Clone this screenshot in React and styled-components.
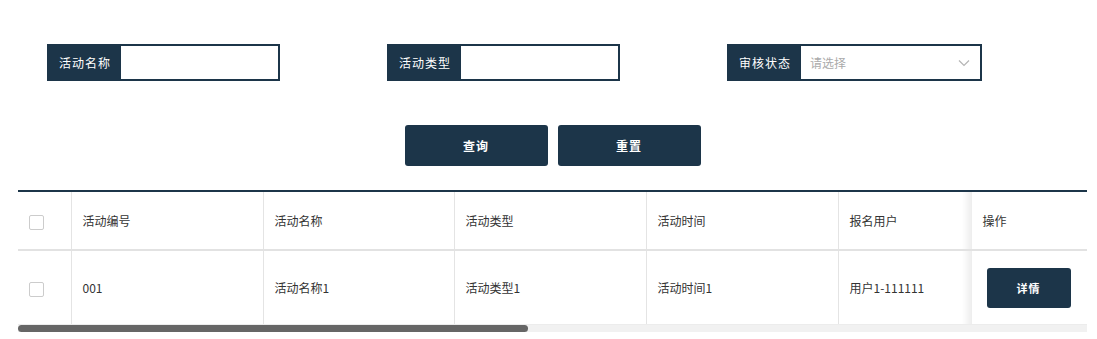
import React from 'react'
import styled, { createGlobalStyle } from 'styled-components'

const navy = '#1c3549'

const GlobalStyle = createGlobalStyle`
    body {
        margin: 0;
        background: #fff;
        font-family: "Noto Sans CJK SC", "Liberation Sans", sans-serif;
    }
`

const Page = styled.div`
    padding: 44px 10px 0 18px;
`

const SearchForm = styled.div`
    display: grid;
    grid-template-columns: repeat(3, 340px);
    padding-left: 29px;
`

const Field = styled.div`
    display: flex;
    width: ${p => p.width}px;
    height: 37px;
    border: 2px solid ${navy};
    box-sizing: border-box;
`

const FieldLabel = styled.div`
    display: flex;
    align-items: center;
    justify-content: center;
    width: 72px;
    flex-shrink: 0;
    background: ${navy};
    color: #fff;
    font-size: 12px;
    letter-spacing: 1px;
`

const FieldInput = styled.input`
    flex: 1;
    min-width: 0;
    border: none;
    outline: none;
    padding: 0 10px;
    font: inherit;
    font-size: 12px;
`

const SelectBox = styled.div`
    flex: 1;
    display: flex;
    align-items: center;
    justify-content: space-between;
    padding: 0 10px 0 9px;
    color: #aaa;
    font-size: 12px;
`

const Actions = styled.div`
    display: flex;
    justify-content: center;
    gap: 10px;
    margin: 44px 0 24px;
`

const Button = styled.button`
    width: ${p => p.width || 143}px;
    height: ${p => p.height || 41}px;
    background: ${navy};
    color: #fff;
    border: none;
    border-radius: 3px;
    font-family: inherit;
    font-size: ${p => p.small ? 11 : 12}px;
    font-weight: 700;
    letter-spacing: 1px;
    cursor: pointer;
`

const TableBox = styled.div`
    width: 1069px;
    border-top: 2px solid ${navy};
`

const TableWrap = styled.div`
    overflow: hidden;
`

const ScrollTrack = styled.div`
    height: 7px;
    background: #f1f1f1;
`

const ScrollThumb = styled.div`
    height: 100%;
    background: #666;
    border-radius: 4px;
`

const Table = styled.table`
    width: 2240px;
    border-collapse: collapse;
    table-layout: fixed;
    font-size: 12px;
    color: #333;
`

const stickyCell = `
    position: sticky;
    right: 0;
    border-right: 1px solid #e6e6e6;

    &::before {
        content: "";
        position: absolute;
        top: 0;
        bottom: 0;
        left: -10px;
        width: 10px;
        background: linear-gradient(to left, rgba(0, 0, 0, 0.07), rgba(0, 0, 0, 0));
    }
`

const Th = styled.th`
    height: 57px;
    padding: 0 11px;
    text-align: left;
    font-weight: 400;
    border-right: 1px solid #e4e4e4;
    border-bottom: 2px solid #e2e2e2;
    background: #fff;
    ${p => p.sticky && stickyCell}
`

const Td = styled.td`
    height: 73px;
    padding: 0 ${p => p.sticky ? 15 : 11}px;
    border-right: 1px solid #e4e4e4;
    border-bottom: 1px solid #ececec;
    background: #fff;
    ${p => p.sticky && stickyCell}
`

const Check = styled.span`
    display: inline-block;
    width: 13px;
    height: 13px;
    border: 1px solid #ccc;
    border-radius: 2px;
    vertical-align: middle;
`

const Chevron = () => (
    <svg width="12" height="8" viewBox="0 0 12 8" fill="none">
        <path d="M1 1.5l5 5 5-5" stroke="#b5b5b5" strokeWidth="1.2" />
    </svg>
)

const columns = [
    { key: 'check', width: 53 },
    { key: 'no', title: '活动编号', width: 192 },
    { key: 'name', title: '活动名称', width: 191 },
    { key: 'type', title: '活动类型', width: 192 },
    { key: 'time', title: '活动时间', width: 192 },
    { key: 'user', title: '报名用户', width: 1304 },
    { key: 'op', title: '操作', width: 116 },
]

const rows = [
    { no: '001', name: '活动名称1', type: '活动类型1', time: '活动时间1', user: '用户1-111111' },
]

const tableWidth = 2240
const viewWidth = 1069

export default function App() {
    return (
        <Page>
            <GlobalStyle />
            <SearchForm>
                <Field width={233}>
                    <FieldLabel>活动名称</FieldLabel>
                    <FieldInput />
                </Field>
                <Field width={233}>
                    <FieldLabel>活动类型</FieldLabel>
                    <FieldInput />
                </Field>
                <Field width={255}>
                    <FieldLabel>审核状态</FieldLabel>
                    <SelectBox>
                        <span>请选择</span>
                        <Chevron />
                    </SelectBox>
                </Field>
            </SearchForm>
            <Actions>
                <Button>查询</Button>
                <Button>重置</Button>
            </Actions>
            <TableBox>
                <TableWrap>
                    <Table>
                        <colgroup>
                            {columns.map(c => <col key={c.key} style={{ width: c.width }} />)}
                        </colgroup>
                        <thead>
                            <tr>
                                <Th><Check /></Th>
                                {columns.slice(1).map(c => (
                                    <Th key={c.key} sticky={c.key === 'op'}>{c.title}</Th>
                                ))}
                            </tr>
                        </thead>
                        <tbody>
                            {rows.map(r => (
                                <tr key={r.no}>
                                    <Td><Check /></Td>
                                    <Td>{r.no}</Td>
                                    <Td>{r.name}</Td>
                                    <Td>{r.type}</Td>
                                    <Td>{r.time}</Td>
                                    <Td>{r.user}</Td>
                                    <Td sticky>
                                        <Button small width={84} height={40}>详情</Button>
                                    </Td>
                                </tr>
                            ))}
                        </tbody>
                    </Table>
                </TableWrap>
                <ScrollTrack>
                    <ScrollThumb style={{ width: Math.round(viewWidth * viewWidth / tableWidth) }} />
                </ScrollTrack>
            </TableBox>
        </Page>
    )
}
